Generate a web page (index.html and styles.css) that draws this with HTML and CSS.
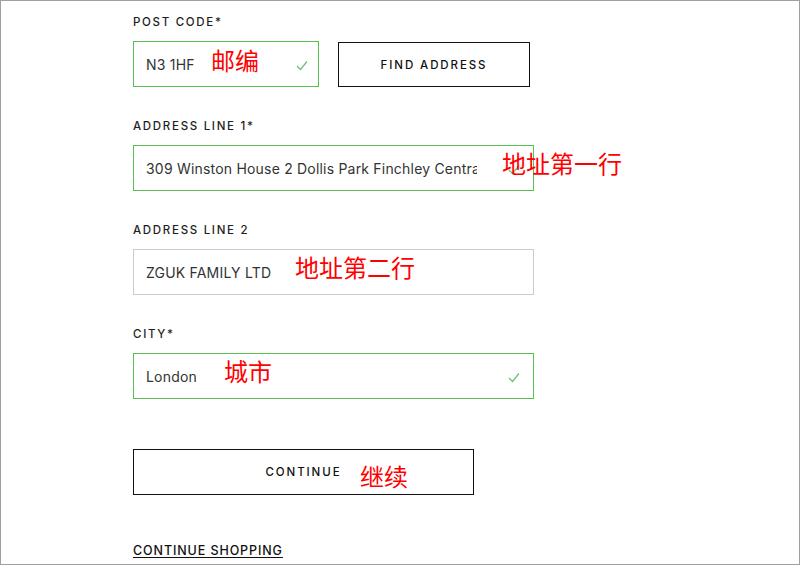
FILE: index.html
```html
<!DOCTYPE html>
<html lang="en">
<head>
<meta charset="utf-8">
<title>Address</title>
<link rel="stylesheet" href="styles.css">
</head>
<body>
<div class="page">
  <form class="form">
    <div class="group">
      <div class="label">POST CODE*</div>
      <div class="row">
        <div class="field field--valid field--postcode">
          <span class="value">N3 1HF</span>
          <svg class="check" viewBox="0 0 12 11" width="12" height="11"><path d="M1 6 L4.5 9.5 L11 1.5" fill="none" stroke="#6cbf6c" stroke-width="1.2"/></svg>
          <span class="note note--postcode">邮编</span>
        </div>
        <button type="button" class="btn btn--find">FIND ADDRESS</button>
      </div>
    </div>
    <div class="group">
      <div class="label">ADDRESS LINE 1*</div>
      <div class="field field--valid field--wide">
        <span class="value">309 Winston House 2 Dollis Park Finchley Central</span>
        <svg class="check check--wide" viewBox="0 0 12 11" width="12" height="11"><path d="M1 6 L4.5 9.5 L11 1.5" fill="none" stroke="#6cbf6c" stroke-width="1.2"/></svg>
        <span class="note note--addr1">地址第一行</span>
      </div>
    </div>
    <div class="group">
      <div class="label">ADDRESS LINE 2</div>
      <div class="field field--wide">
        <span class="value">ZGUK FAMILY LTD</span>
        <span class="note note--addr2">地址第二行</span>
      </div>
    </div>
    <div class="group">
      <div class="label">CITY*</div>
      <div class="field field--valid field--wide">
        <span class="value">London</span>
        <svg class="check check--wide" viewBox="0 0 12 11" width="12" height="11"><path d="M1 6 L4.5 9.5 L11 1.5" fill="none" stroke="#6cbf6c" stroke-width="1.2"/></svg>
        <span class="note note--city">城市</span>
      </div>
    </div>
    <button type="button" class="btn btn--continue">CONTINUE<span class="note note--continue">继续</span></button>
    <a class="link" href="#">CONTINUE SHOPPING</a>
  </form>
</div>
</body>
</html>
```

FILE: styles.css
```css
html, body {
  margin: 0;
  padding: 0;
  background: #fff;
}
body {
  width: 800px;
  height: 565px;
  box-sizing: border-box;
  border: 1px solid #a0a0a0;
  overflow: hidden;
  font-family: Inter, "DejaVu Sans", sans-serif;
  color: #222;
}
.page {
  padding: 13px 0 0 132px;
}
.form {
  display: flex;
  flex-direction: column;
  align-items: flex-start;
}
.group {
  display: flex;
  flex-direction: column;
  gap: 11px;
  margin-bottom: 31px;
}
.label {
  font-size: 11.5px;
  line-height: 16px;
  font-weight: 500;
  letter-spacing: 1.7px;
  color: #1e1e1e;
}
.row {
  display: flex;
  gap: 19px;
  align-items: flex-start;
}
.field {
  position: relative;
  box-sizing: border-box;
  height: 46px;
  border: 1px solid #cccccc;
  display: flex;
  align-items: center;
  padding: 0 56px 0 12px;
  font-size: 14px;
  letter-spacing: 0.2px;
  color: #333;
}
.field--valid {
  border-color: #58c24e;
}
.field--postcode {
  width: 186px;
}
.field--wide {
  width: 401px;
}
.value {
  white-space: nowrap;
  overflow: hidden;
  text-overflow: clip;
  display: block;
}
.check {
  position: absolute;
  right: 10px;
  top: 18px;
}
.check--wide {
  right: 13px;
}
.note {
  position: absolute;
  font-family: "Noto Sans CJK SC", sans-serif;
  font-size: 24px;
  line-height: 1;
  color: #ff0000;
  letter-spacing: 0;
  font-weight: 400;
  white-space: nowrap;
}
.note--postcode { left: 77px; top: 6px; }
.note--addr1 { left: 368px; top: 5px; }
.note--addr2 { left: 161px; top: 5px; }
.note--city { left: 90px; top: 5px; }
.note--continue { left: 226px; top: 14px; }
.btn {
  position: relative;
  box-sizing: border-box;
  height: 46px;
  background: #fff;
  border: 1px solid #111;
  font-family: Inter, "DejaVu Sans", sans-serif;
  font-size: 11.5px;
  font-weight: 500;
  letter-spacing: 1.9px;
  color: #111;
  padding: 0;
  cursor: pointer;
}
.btn--find {
  width: 192px;
  height: 45px;
  margin-top: 1px;
}
.btn--continue {
  width: 341px;
  margin-top: 19px;
}
.link {
  margin-top: 48px;
  font-size: 12.5px;
  line-height: 16px;
  font-weight: 500;
  letter-spacing: 0.9px;
  color: #111;
  text-decoration: underline;
  text-underline-offset: 2px;
}
```
